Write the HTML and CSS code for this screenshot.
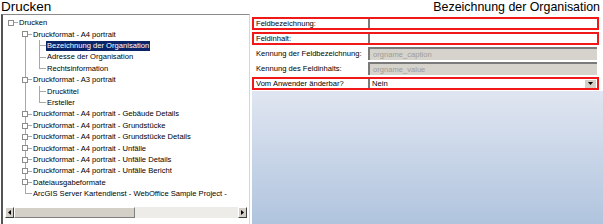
FILE: index.html
```html
<!DOCTYPE html>
<html>
<head>
<meta charset="utf-8">
<link rel="stylesheet" href="styles.css">
</head>
<body>
<div class="app">
  <div class="header">
    <span class="title left">Drucken</span>
    <span class="title right">Bezeichnung der Organisation</span>
  </div>
  <div class="main">
    <div class="tree-panel">
      <div class="tree">
        <div class="row"><span class="g ga b0"><i class="box"></i></span><span class="lbl root">Drucken</span></div>
        <div class="row"><span class="g ga"></span><span class="g gb bf"><i class="box"></i></span><span class="lbl">Druckformat - A4 portrait</span></div>
        <div class="row"><span class="g ga"></span><span class="g gb v"></span><span class="g gc t"></span><span class="lbl sel">Bezeichnung der Organisation</span></div>
        <div class="row"><span class="g ga"></span><span class="g gb v"></span><span class="g gc t"></span><span class="lbl">Adresse der Organisation</span></div>
        <div class="row"><span class="g ga"></span><span class="g gb v"></span><span class="g gc l"></span><span class="lbl">Rechtsinformation</span></div>
        <div class="row"><span class="g ga"></span><span class="g gb bm"><i class="box"></i></span><span class="lbl">Druckformat - A3 portrait</span></div>
        <div class="row"><span class="g ga"></span><span class="g gb v"></span><span class="g gc t"></span><span class="lbl">Drucktitel</span></div>
        <div class="row"><span class="g ga"></span><span class="g gb v"></span><span class="g gc l"></span><span class="lbl">Ersteller</span></div>
        <div class="row"><span class="g ga"></span><span class="g gb bm"><i class="box"></i></span><span class="lbl">Druckformat - A4 portrait - Gebäude Details</span></div>
        <div class="row"><span class="g ga"></span><span class="g gb bm"><i class="box"></i></span><span class="lbl">Druckformat - A4 portrait - Grundstücke</span></div>
        <div class="row"><span class="g ga"></span><span class="g gb bm"><i class="box"></i></span><span class="lbl">Druckformat - A4 portrait - Grundstücke Details</span></div>
        <div class="row"><span class="g ga"></span><span class="g gb bm"><i class="box"></i></span><span class="lbl">Druckformat - A4 portrait - Unfälle</span></div>
        <div class="row"><span class="g ga"></span><span class="g gb bm"><i class="box"></i></span><span class="lbl">Druckformat - A4 portrait - Unfälle Details</span></div>
        <div class="row"><span class="g ga"></span><span class="g gb bm"><i class="box"></i></span><span class="lbl">Druckformat - A4 portrait - Unfälle Bericht</span></div>
        <div class="row"><span class="g ga"></span><span class="g gb bm"><i class="box"></i></span><span class="lbl">Dateiausgabeformate</span></div>
        <div class="row"><span class="g ga"></span><span class="g gb l"></span><span class="lbl">ArcGIS Server Kartendienst - WebOffice Sample Project -</span></div>
      </div>
      <div class="hscroll">
        <span class="sbtn"><svg width="3" height="5" viewBox="0 0 3 5"><path d="M3 0 L0 2.5 L3 5 Z" fill="#000"/></svg></span>
        <span class="thumb"></span>
        <span class="track"></span>
        <span class="sbtn"><svg width="3" height="5" viewBox="0 0 3 5"><path d="M0 0 L3 2.5 L0 5 Z" fill="#000"/></svg></span>
      </div>
    </div>
    <div class="form-panel">
      <div class="form">
        <div class="frow req">
          <span class="flabel">Feldbezeichnung:</span>
          <span class="finput"></span>
        </div>
        <div class="frow req">
          <span class="flabel">Feldinhalt:</span>
          <span class="finput"></span>
        </div>
        <div class="frow plain">
          <span class="flabel">Kennung der Feldbezeichnung:</span>
          <span class="finput disabled">orgname_caption</span>
        </div>
        <div class="frow plain">
          <span class="flabel">Kennung des Feldinhalts:</span>
          <span class="finput disabled">orgname_value</span>
        </div>
        <div class="frow req">
          <span class="flabel">Vom Anwender änderbar?</span>
          <span class="finput select"><span class="val">Nein</span><span class="dd"><svg width="5" height="3" viewBox="0 0 5 3"><path d="M0 0 H5 L2.5 3 Z" fill="#000"/></svg></span></span>
        </div>
      </div>
      <div class="backdrop"></div>
    </div>
  </div>
</div>
</body>
</html>
```

FILE: styles.css
```css
* { box-sizing: border-box; }
html, body {
  margin: 0;
  padding: 0;
  background: #fff;
}
body {
  width: 603px;
  height: 224px;
  overflow: hidden;
  font-family: "Liberation Sans", Arial, sans-serif;
  color: #000;
}
.app {
  width: 603px;
  height: 224px;
  display: flex;
  flex-direction: column;
}
.header {
  height: 14px;
  display: flex;
  justify-content: space-between;
  align-items: center;
  padding: 0 3px 0 1px;
}
.title {
  line-height: 14px;
  white-space: nowrap;
}
.title.left { font-size: 13.5px; }
.title.right { font-size: 12.4px; }
.main {
  flex: 1;
  display: flex;
}
.tree-panel {
  width: 249px;
  margin-left: 1px;
  display: flex;
  flex-direction: column;
  border-top: 1px solid #8a8a8a;
  border-left: 2px solid #555;
  border-right: 1px solid #d8d6d0;
  background: #fff;
}
.tree {
  flex: 1;
  padding-top: 2.3px;
  font-size: 7.6px;
  overflow: hidden;
}
.row {
  height: 11.4px;
  display: flex;
  align-items: stretch;
  white-space: nowrap;
}
.g {
  flex: 0 0 auto;
  display: flex;
  align-items: center;
  justify-content: center;
  background-repeat: no-repeat;
}
.ga { width: 15px; }
.gb { width: 14px; }
.gc { width: 14px; }
.box {
  display: block;
  width: 6px;
  height: 6px;
  border: 1px solid #8c8c8c;
  background: #fff;
}
/* connectors */
.v {
  background-image: linear-gradient(#a8a8a8, #a8a8a8);
  background-position: 50% 0;
  background-size: 1px 100%;
}
.t {
  background-image: linear-gradient(#a8a8a8, #a8a8a8), linear-gradient(#a8a8a8, #a8a8a8);
  background-position: 50% 0, 100% 50%;
  background-size: 1px 100%, 50% 1px;
}
.l {
  background-image: linear-gradient(#a8a8a8, #a8a8a8), linear-gradient(#a8a8a8, #a8a8a8);
  background-position: 50% 0, 100% 50%;
  background-size: 1px 50%, 50% 1px;
}
.b0 {
  background-image: linear-gradient(#a8a8a8, #a8a8a8);
  background-position: 100% 50%;
  background-size: 50% 1px;
}
.bf {
  background-image: linear-gradient(#a8a8a8, #a8a8a8), linear-gradient(#a8a8a8, #a8a8a8);
  background-position: 50% 100%, 100% 50%;
  background-size: 1px 50%, 50% 1px;
}
.bm {
  background-image: linear-gradient(#a8a8a8, #a8a8a8), linear-gradient(#a8a8a8, #a8a8a8);
  background-position: 50% 0, 100% 50%;
  background-size: 1px 100%, 50% 1px;
}
.lbl {
  padding: 0 1px;
  line-height: 11.4px;
}
.lbl.root { padding-left: 1px; }
.lbl.sel {
  background: #0a246a;
  color: #fff;
  margin: 0.6px 0;
  line-height: 10.2px;
}
.hscroll {
  height: 11px;
  margin: 0 2px 6px 2px;
  display: flex;
  background: #eeece8;
}
.sbtn {
  width: 9px;
  flex: 0 0 auto;
  display: flex;
  align-items: center;
  justify-content: center;
  background: #d4d0c8;
  border-top: 1px solid #fff;
  border-left: 1px solid #fff;
  border-right: 1px solid #404040;
  border-bottom: 1px solid #404040;
}
.thumb {
  width: 121px;
  flex: 0 0 auto;
  background: #d4d0c8;
  border-top: 1px solid #fff;
  border-left: 1px solid #fff;
  border-right: 1px solid #808080;
  border-bottom: 1px solid #808080;
}
.track { flex: 1; }
.form-panel {
  flex: 1;
  margin-left: 2px;
  display: flex;
  flex-direction: column;
}
.form {
  background: #fff;
  padding: 3px 4px 1px 0;
  display: flex;
  flex-direction: column;
  gap: 2px;
  font-size: 7.6px;
}
.frow {
  height: 13px;
  display: flex;
}
.frow.req {
  border: 2px solid #f01818;
}
.flabel {
  width: 114px;
  flex: 0 0 auto;
  padding-left: 2px;
  display: flex;
  align-items: center;
  white-space: nowrap;
}
.frow.plain .flabel {
  width: 116px;
  padding-left: 4px;
}
.finput {
  flex: 1;
  border-left: 2px solid #7a7a7a;
  background: #fff;
  display: flex;
  align-items: center;
  padding-left: 3px;
}
.finput.disabled {
  background: #d6d3cc;
  border-top: 2px solid #7a7a7a;
  color: #a09c96;
  margin-right: 2px;
}
.finput.select {
  justify-content: space-between;
  padding-left: 2px;
  padding-right: 1px;
}
.dd {
  width: 11px;
  height: 8px;
  background: #d4d0c8;
  display: flex;
  align-items: center;
  justify-content: center;
}
.backdrop {
  flex: 1;
  background: linear-gradient(#e0e6f1, #b0c4de);
}
```
